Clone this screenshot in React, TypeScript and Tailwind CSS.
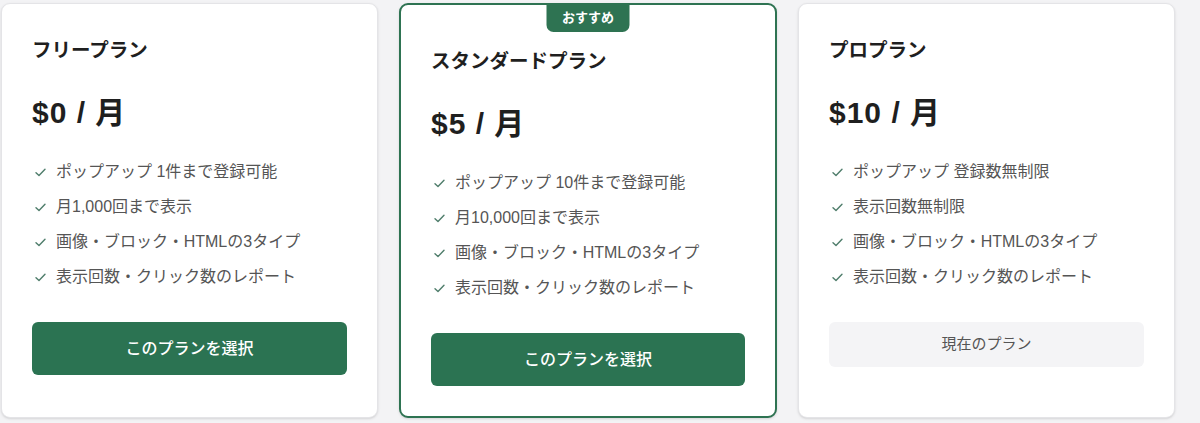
const FONT = "font-['Liberation_Sans','Noto_Sans_CJK_JP',sans-serif]";

interface Plan {
  id: string;
  name: string;
  price: string;
  features: string[];
  recommended?: boolean;
  current?: boolean;
}

const PLANS: Plan[] = [
  {
    id: "free",
    name: "フリープラン",
    price: "$0 / 月",
    features: [
      "ポップアップ 1件まで登録可能",
      "月1,000回まで表示",
      "画像・ブロック・HTMLの3タイプ",
      "表示回数・クリック数のレポート",
    ],
  },
  {
    id: "standard",
    name: "スタンダードプラン",
    price: "$5 / 月",
    recommended: true,
    features: [
      "ポップアップ 10件まで登録可能",
      "月10,000回まで表示",
      "画像・ブロック・HTMLの3タイプ",
      "表示回数・クリック数のレポート",
    ],
  },
  {
    id: "pro",
    name: "プロプラン",
    price: "$10 / 月",
    current: true,
    features: [
      "ポップアップ 登録数無制限",
      "表示回数無制限",
      "画像・ブロック・HTMLの3タイプ",
      "表示回数・クリック数のレポート",
    ],
  },
];

function Check(): JSX.Element {
  return (
    <svg width="11" height="9" viewBox="0 0 11 9" fill="none" className="ml-[3px] shrink-0">
      <path d="M1 4.8 L4 7.6 L10 1.2" stroke="#4f7d6b" strokeWidth="1.4" strokeLinecap="round" strokeLinejoin="round" />
    </svg>
  );
}

function PlanCard({ plan }: { plan: Plan }): JSX.Element {
  return (
    <div
      className={
        plan.recommended
          ? "relative flex w-[378px] flex-col rounded-[9px] border-2 border-[#2e7352] bg-white px-[30px] pb-[30px] pt-[42px] shadow-sm"
          : "relative flex w-[377px] flex-col rounded-[9px] border border-[#e4e4e7] bg-white px-[30px] pb-[30px] pt-[32px] shadow-sm"
      }
    >
      {plan.recommended && (
        <span className="absolute -top-[2px] left-1/2 flex h-[29px] w-[83px] -translate-x-1/2 items-center justify-center rounded-b-[7px] bg-[#2e7352] text-[13px] font-bold text-white">
          おすすめ
        </span>
      )}
      <h2 className="text-[19.5px] font-bold leading-[28px] text-[#1f1f1f]">{plan.name}</h2>
      <p className="mt-[31px] text-[30px] font-bold leading-[36px] tracking-[1px] text-[#1f1f1f]">{plan.price}</p>
      <ul className="mt-[29px] flex flex-col gap-[11px]">
        {plan.features.map((f) => (
          <li key={f} className="flex h-[24px] items-center gap-[10px] text-[16px] text-[#555]">
            <Check />
            <span>{f}</span>
          </li>
        ))}
      </ul>
      {plan.current ? (
        <button className="mt-[33px] h-[45px] w-full rounded-[6px] bg-[#f4f4f6] text-[15px] text-[#555]">
          現在のプラン
        </button>
      ) : (
        <button className="mt-[33px] h-[53px] w-full rounded-[6px] bg-[#2b7352] text-[16px] font-medium text-white">
          このプランを選択
        </button>
      )}
    </div>
  );
}

export default function App(): JSX.Element {
  return (
    <div className={`${FONT} min-h-[423px] bg-[#f3f3f5] pl-[1px] pt-[3px]`}>
      <div className="flex items-stretch gap-[21px]">
        {PLANS.map((p) => (
          <PlanCard key={p.id} plan={p} />
        ))}
      </div>
    </div>
  );
}
